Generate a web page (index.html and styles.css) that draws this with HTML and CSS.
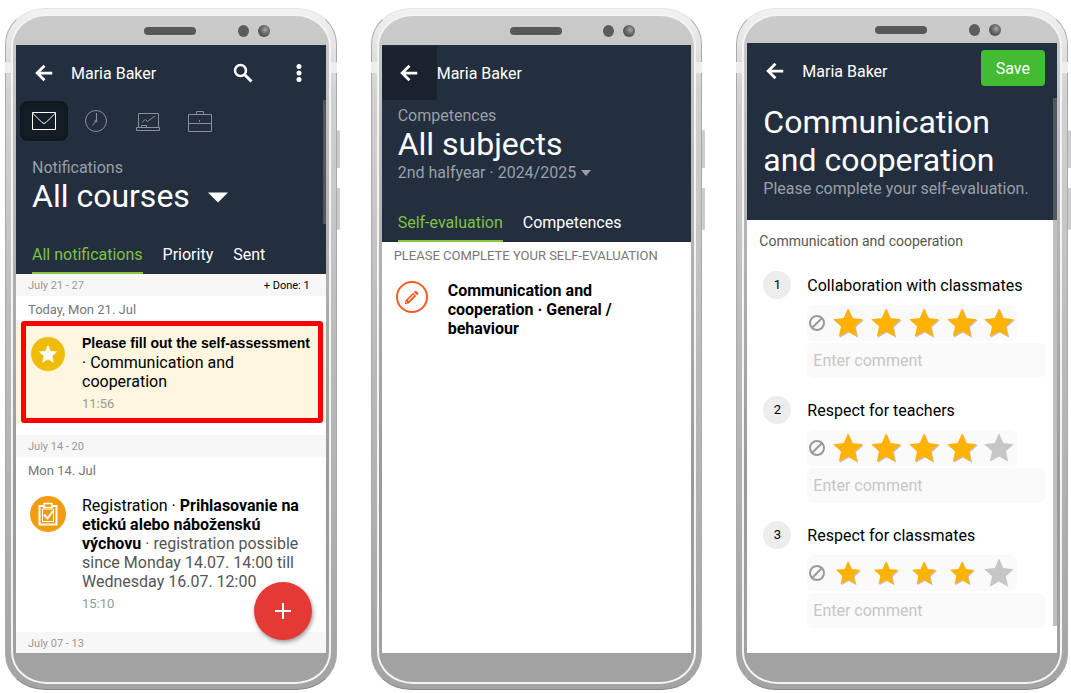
FILE: index.html
```html
<!DOCTYPE html>
<html lang="en">
<head>
    <meta charset="UTF-8">
    <meta name="viewport" content="width=device-width, initial-scale=1.0">
    <title>Self-evaluation</title>
    <link rel="stylesheet" href="styles.css">
</head>
<body>
    <!-- Shared icons -->
    <svg class="sprite" aria-hidden="true">
        <symbol id="icon-back" viewBox="0 0 24 24">
            <path d="M21 12H5M12.5 4L4.5 12l8 8" fill="none" stroke="currentColor" stroke-width="3"/>
        </symbol>
        <symbol id="icon-star" viewBox="0 0 24 24">
            <path d="M12 1l3.2 7.3 7.9.8-5.9 5.4 1.7 7.9L12 18.400l-6.900 4 1.700-7.900L.9 9.100l7.900-.8z" fill="currentColor"/>
        </symbol>
        <symbol id="icon-ban" viewBox="0 0 18 18">
            <circle cx="9" cy="9" r="7" fill="none" stroke="currentColor" stroke-width="2"/>
            <path d="M4.500 13.500l9-9" stroke="currentColor" stroke-width="2"/>
        </symbol>
    </svg>

    <main class="phones">
        <!-- Notifications -->
        <section class="phone">
            <div class="phone-body">
                <div class="bezel"><i class="speaker"></i><i class="sensor"></i><i class="camera"></i></div>
                <div class="screen">
                    <header class="header">
                        <div class="appbar">
                            <button class="back" aria-label="Back"><svg><use href="#icon-back"/></svg></button>
                            <span class="user">Maria Baker</span>
                            <button class="tool" aria-label="Search">
                                <svg viewBox="0 0 20 20"><circle cx="7.500" cy="7.500" r="5.500" fill="none" stroke="currentColor" stroke-width="2.500"/><path d="M11.500 11.500l7 7" stroke="currentColor" stroke-width="3"/></svg>
                            </button>
                            <button class="tool" aria-label="More">
                                <svg viewBox="0 0 20 20" fill="currentColor"><circle cx="10" cy="3.500" r="2.500"/><circle cx="10" cy="10" r="2.500"/><circle cx="10" cy="16.500" r="2.500"/></svg>
                            </button>
                        </div>
                        <nav class="modules">
                            <button class="module active" aria-label="Messages">
                                <svg viewBox="0 0 26 24"><path d="M1.500 3.500h23v17h-23zM1.500 4l9.500 9.500q2 2 4 0L24.500 4"/></svg>
                            </button>
                            <button class="module" aria-label="Timetable">
                                <svg viewBox="0 0 26 24"><circle cx="13" cy="12" r="10.500"/><path d="M13.500 4v7.500l-4 5"/><circle cx="13" cy="12" r="1"/></svg>
                            </button>
                            <button class="module" aria-label="Results">
                                <svg viewBox="0 0 26 24"><path d="M3.500 18V4.500h20V18M1.500 18.500h23v3h-23zM6.500 18v-1.500h5V18M7 13.500l3-3 2.500 2L20 7"/></svg>
                            </button>
                            <button class="module" aria-label="Work">
                                <svg viewBox="0 0 26 24"><path d="M1.500 5.500h23v17h-23zM1.500 14.500h23M9.500 5.500v-3h7v3M12.500 11v2"/></svg>
                            </button>
                        </nav>
                        <div class="heading heading-modules">
                            <p class="kicker">Notifications</p>
                            <h1>All courses <button class="caret" aria-label="Choose course"><svg viewBox="0 0 20 10"><path d="M0 0h20L10 10z" fill="currentColor"/></svg></button></h1>
                        </div>
                        <nav class="tabs">
                            <button class="tab active">All notifications</button>
                            <button class="tab">Priority</button>
                            <button class="tab">Sent</button>
                        </nav>
                    </header>
                    <div class="feed">
                        <div class="week"><span>July 21 - 27</span><button class="done">+ Done: 1</button></div>
                        <h2 class="day">Today, Mon 21. Jul</h2>
                        <article class="note note-marked">
                            <span class="note-icon note-star"><svg><use href="#icon-star"/></svg></span>
                            <div>
                                <p><b class="alert">Please fill out the self-assessment</b> · Communication and cooperation</p>
                                <time>11:56</time>
                            </div>
                        </article>
                        <div class="week"><span>July 14 - 20</span></div>
                        <h2 class="day">Mon 14. Jul</h2>
                        <article class="note">
                            <span class="note-icon note-form">
                                <svg viewBox="0 0 24 24" fill="none" stroke="currentColor"><path d="M3.500 4h17v18.500h-17z" stroke-width="2"/><path d="M6.500 7h11v12.500h-11z"/><path d="M8 1.500h8v4H8z" fill="#f39c12" stroke-width="1.500"/><path d="M8 12.500l3.500 4L17 9" stroke-width="2"/></svg>
                            </span>
                            <div>
                                <p>Registration · <b>Prihlasovanie na etickú alebo náboženskú výchovu</b> <span class="detail">· registration possible since Monday 14.07. 14:00 till Wednesday 16.07. 12:00</span></p>
                                <time>15:10</time>
                            </div>
                        </article>
                        <div class="week"><span>July 07 - 13</span></div>
                    </div>
                    <button class="fab" aria-label="New"><svg viewBox="0 0 16 16"><path d="M8 0v16M0 8h16" stroke="currentColor" stroke-width="2"/></svg></button>
                    <i class="scrollbar scrollbar-short"></i>
                </div>
            </div>
        </section>

        <!-- Competences -->
        <section class="phone">
            <div class="phone-body">
                <div class="bezel"><i class="speaker"></i><i class="sensor"></i><i class="camera"></i></div>
                <div class="screen">
                    <header class="header">
                        <div class="appbar">
                            <button class="back pressed" aria-label="Back"><svg><use href="#icon-back"/></svg></button>
                            <span class="user">Maria Baker</span>
                        </div>
                        <div class="heading">
                            <p class="kicker">Competences</p>
                            <h1>All subjects</h1>
                            <button class="kicker term">2nd halfyear · 2024/2025 <svg viewBox="0 0 10 6"><path d="M0 0h10L5 6z" fill="currentColor"/></svg></button>
                        </div>
                        <nav class="tabs">
                            <button class="tab active">Self-evaluation</button>
                            <button class="tab">Competences</button>
                        </nav>
                    </header>
                    <h2 class="section-title">Please complete your self-evaluation</h2>
                    <a class="task" href="#review">
                        <span class="task-icon">
                            <svg viewBox="0 0 16 16" fill="currentColor"><path d="M11.300 1.200q1-1 2 0l1.500 1.500q1 1 0 2l-1 1L10.300 2.200z"/><path fill-rule="evenodd" d="M9.600 2.900l3.500 3.500-8 8L.8 15.200l.8-4.300zM10 5L4 11l.8.8 6-6zM2.300 12.600l-.4 1.500 1.500-.4z"/></svg>
                        </span>
                        <b>Communication and cooperation · General / behaviour</b>
                    </a>
                </div>
            </div>
        </section>

        <!-- Self-evaluation form -->
        <section class="phone phone-form" id="review">
            <div class="phone-body">
                <div class="bezel"><i class="speaker"></i><i class="sensor"></i><i class="camera"></i></div>
                <form class="screen">
                    <header class="header">
                        <div class="appbar">
                            <button type="button" class="back" aria-label="Back"><svg><use href="#icon-back"/></svg></button>
                            <span class="user">Maria Baker</span>
                            <button type="button" class="save">Save</button>
                        </div>
                        <div class="heading heading-form">
                            <h1>Communication and cooperation</h1>
                            <p class="kicker">Please complete your self-evaluation.</p>
                        </div>
                    </header>
                    <h2 class="group">Communication and cooperation</h2>
                    <div id="questions"></div>
                    <i class="scrollbar scrollbar-long"></i>
                </form>
            </div>
        </section>
    </main>

    <script>
        const questions = [
            { title: "Collaboration with classmates", rating: 5 },
            { title: "Respect for teachers", rating: 4 },
            { title: "Respect for classmates", rating: 4, compact: true }
        ];

        function renderStars(question, index) {
            return [1, 2, 3, 4, 5].map(value => `
                <label class="star">
                    <input type="radio" name="rating-${index}" value="${value}" aria-label="${value} of 5" ${value === question.rating ? 'checked' : ''}>
                    <svg class="${value <= question.rating ? 'on' : ''}"><use href="#icon-star"/></svg>
                </label>
            `).join('');
        }

        document.getElementById('questions').innerHTML = questions.map((question, index) => `
            <div class="question">
                <span class="number">${index + 1}</span>
                <div class="answer">
                    <h3>${question.title}</h3>
                    <div class="rating ${question.compact ? 'compact' : ''}" role="radiogroup" aria-label="${question.title}">
                        <button type="button" class="clear" aria-label="No rating"><svg><use href="#icon-ban"/></svg></button>
                        ${renderStars(question, index)}
                    </div>
                    <input type="text" class="comment" placeholder="Enter comment" aria-label="Comment: ${question.title}">
                </div>
            </div>
        `).join('');
    </script>
</body>
</html>
```
FILE: styles.css
```css
* {
    margin: 0;
    padding: 0;
    box-sizing: border-box;
}

body {
    font-family: Roboto, "Liberation Sans", sans-serif;
    font-size: 16px;
    line-height: 19px;
    color: #000;
    background: #fff;
}

button,
input {
    font: inherit;
    color: inherit;
    border: none;
    background: none;
}

button {
    cursor: pointer;
}

svg {
    display: block;
}

.sprite {
    position: absolute;
    width: 0;
    height: 0;
}

/* Phone frames */

.phones {
    display: grid;
    grid-template-columns: repeat(3, minmax(0, 1fr));
    gap: 34px;
    min-height: 100vh;
    padding: 8px 3px 3px 5px;
}

.phone {
    position: relative;
    display: flex;
    padding: 5px;
    border: 1px solid #aaa;
    border-color: #e4e4e4 #aaa #888;
    border-radius: 40px / 36px;
    background: linear-gradient(#f2f2f2, #d2d2d2 12%, #bbb 50%, #a4a4a4);
}

/* antenna strips */
.phone::before {
    content: "";
    position: absolute;
    top: 53px;
    left: -1px;
    right: -1px;
    height: 11px;
    background: #eee;
}

/* side buttons */
.phone::after {
    content: "";
    position: absolute;
    top: 121px;
    right: -4px;
    width: 3px;
    height: 100px;
    border-radius: 2px;
    background: linear-gradient(#ccc 38px, transparent 38px, transparent 58px, #ccc 58px);
}

.phone-body {
    position: relative;
    z-index: 1;
    flex: 1;
    min-width: 0;
    display: flex;
    flex-direction: column;
    padding: 0 3px 29px;
    border: 2px solid #f4f4f4;
    border-radius: 36px / 32px;
    background: linear-gradient(#cbcbcb, #bdbdbd 20%, #999 70%, #a3a3a3);
}

.bezel {
    height: 29px;
    padding: 0 56px 0 128px;
    display: flex;
    align-items: center;
}

.phone-form .bezel {
    height: 27px;
}

.speaker {
    width: 52px;
    height: 8px;
    margin-right: auto;
    border-radius: 4px;
    background: #585858;
}

.sensor,
.camera {
    width: 11px;
    height: 12px;
    border-radius: 50%;
    background: #5c5c5c;
}

.camera {
    width: 12px;
    margin-left: 9px;
    background: radial-gradient(circle at 60% 40%, #aaa, #777 30%, #555 60%);
}

.screen {
    position: relative;
    flex: 1;
    background: #fff;
}

/* Header */

.header {
    color: #fff;
    background: #232f3f;
}

.appbar {
    height: 56px;
    padding-right: 12px;
    display: flex;
    align-items: center;
}

.back {
    width: 55px;
    height: 54px;
    display: grid;
    place-items: center;
}

.back.pressed {
    background: #1a222d;
}

.back svg {
    width: 22px;
    height: 22px;
}

.user {
    flex: 1;
}

.tool {
    margin-left: 36px;
}

.tool:last-child {
    margin-right: 5px;
}

.tool svg {
    width: 20px;
    height: 20px;
}

.save {
    align-self: flex-start;
    height: 36px;
    margin-top: 7px;
    padding: 0 15px;
    border-radius: 4px;
    background: #43bb33;
}

.modules {
    display: flex;
    gap: 4px;
    padding-left: 4px;
}

.module {
    width: 48px;
    height: 40px;
    display: grid;
    place-items: center;
    border-radius: 8px;
    color: #88909a;
}

.module.active {
    color: #fff;
    background: #141c25;
    box-shadow: inset 0 0 4px #0b1016;
}

.module svg {
    width: 26px;
    height: 24px;
    fill: none;
    stroke: currentColor;
}

.heading {
    padding: 5px 16px 0;
}

.heading-modules {
    padding-top: 17px;
}

.heading-form {
    padding: 4px 16px 22px;
}

h1 {
    font-size: 32px;
    line-height: 38px;
    font-weight: 400;
}

.caret {
    margin-left: 10px;
    vertical-align: 4px;
}

.caret svg {
    width: 20px;
    height: 11px;
}

.kicker {
    color: #9a9fa6;
}

.term {
    display: flex;
    align-items: center;
    gap: 5px;
    line-height: 20px;
}

.term svg {
    width: 10px;
    height: 6px;
}

.tabs {
    display: flex;
    gap: 20px;
    padding: 30px 16px 0;
}

.tab {
    padding-bottom: 8px;
    border-bottom: 2px solid transparent;
}

.tab.active {
    color: #7fc241;
    border-color: #8bc53f;
}

/* Notification list */

.week {
    display: flex;
    justify-content: space-between;
    padding: 2px 16px 1px 12px;
    font-size: 11px;
    color: #999;
    background: #f7f7f7;
}

.week:last-child {
    padding-bottom: 0;
}

.done {
    color: #000;
}

.day {
    padding: 4px 12px;
    font-size: 13px;
    font-weight: 400;
    color: #777;
}

.note {
    position: relative;
    display: grid;
    grid-template-columns: 36px 1fr;
    gap: 16px;
    padding: 12px 14px 19px;
}

.note-marked {
    margin-bottom: 12px;
    padding: 10px 14px;
    background: #fef6de;
}

/* highlight box */
.note-marked::after {
    content: "";
    position: absolute;
    inset: -2px 3px 0 5px;
    border: 5px solid #f00;
    border-radius: 3px;
}

.note-icon {
    width: 36px;
    height: 36px;
    display: grid;
    place-items: center;
    border-radius: 50%;
    color: #fff;
    background: #f39c12;
}

.note-icon svg {
    width: 24px;
    height: 24px;
}

.note-star {
    width: 34px;
    height: 34px;
    margin: 4px 1px;
    background: #efbd08;
}

.note-star svg {
    width: 20px;
    height: 20px;
}

.alert {
    font: bold 14px/19px "Liberation Sans", Arial, sans-serif;
    white-space: nowrap;
}

.detail {
    color: #555;
}

time {
    display: block;
    margin-top: 3px;
    font-size: 13px;
    color: #999;
}

.fab {
    position: absolute;
    right: 14px;
    bottom: 13px;
    width: 58px;
    height: 58px;
    display: grid;
    place-items: center;
    border-radius: 50%;
    color: #fff;
    background: #e53935;
    box-shadow: 1px 2px 4px rgba(0, 0, 0, 0.4);
}

.fab svg {
    width: 16px;
    height: 16px;
}

.scrollbar {
    position: absolute;
    top: 55px;
    right: 0;
    width: 3px;
    height: 124px;
    background: rgba(128, 128, 128, 0.5);
}

.scrollbar-long {
    width: 4px;
    height: auto;
    bottom: 27px;
}

/* Competences */

.section-title {
    padding: 4px 12px;
    font-size: 13px;
    font-weight: 400;
    text-transform: uppercase;
    color: #777;
}

.task {
    display: grid;
    grid-template-columns: 32px 1fr;
    gap: 20px;
    padding: 12px 64px 12px 14px;
    color: #000;
    text-decoration: none;
}

.task-icon {
    width: 32px;
    height: 32px;
    display: grid;
    place-items: center;
    border: 2px solid #ff5a26;
    border-radius: 50%;
    color: #ff5a26;
}

.task-icon svg {
    width: 15px;
    height: 15px;
}

/* Self-evaluation form */

.group {
    padding: 12px 12px 20px;
    font-size: 14px;
    font-weight: 400;
    color: #555;
}

.question {
    display: grid;
    grid-template-columns: 28px 1fr;
    gap: 16px;
    padding: 0 12px 18px 16px;
}

.number {
    height: 28px;
    font-size: 13px;
    line-height: 28px;
    text-align: center;
    border-radius: 50%;
    background: #ededed;
}

h3 {
    padding: 5px 0 10px;
    font-size: 16px;
    font-weight: 400;
}

.rating {
    width: fit-content;
    height: 36px;
    display: flex;
    align-items: center;
    border-radius: 6px;
    background: #fafafa;
}

.clear {
    padding-left: 1px;
    color: #999;
}

.clear svg {
    width: 18px;
    height: 18px;
}

.star {
    width: 38px;
    display: grid;
    place-items: center;
}

.star:first-of-type {
    margin-left: 3px;
}

.star:last-child {
    width: 36px;
}

.star input {
    position: absolute;
    opacity: 0;
}

.star svg {
    width: 32px;
    height: 32px;
    color: #c6c6c6;
}

.star .on {
    color: #ffb300;
    filter: drop-shadow(1px 1px 0 #c9bcc4);
}

.compact .on {
    width: 26px;
    height: 26px;
}

.comment {
    display: block;
    width: 100%;
    height: 35px;
    margin-top: 2px;
    padding: 0 6px;
    border-radius: 6px;
    background: #fafafa;
}

.comment::placeholder {
    color: #c6c6c6;
}
```
